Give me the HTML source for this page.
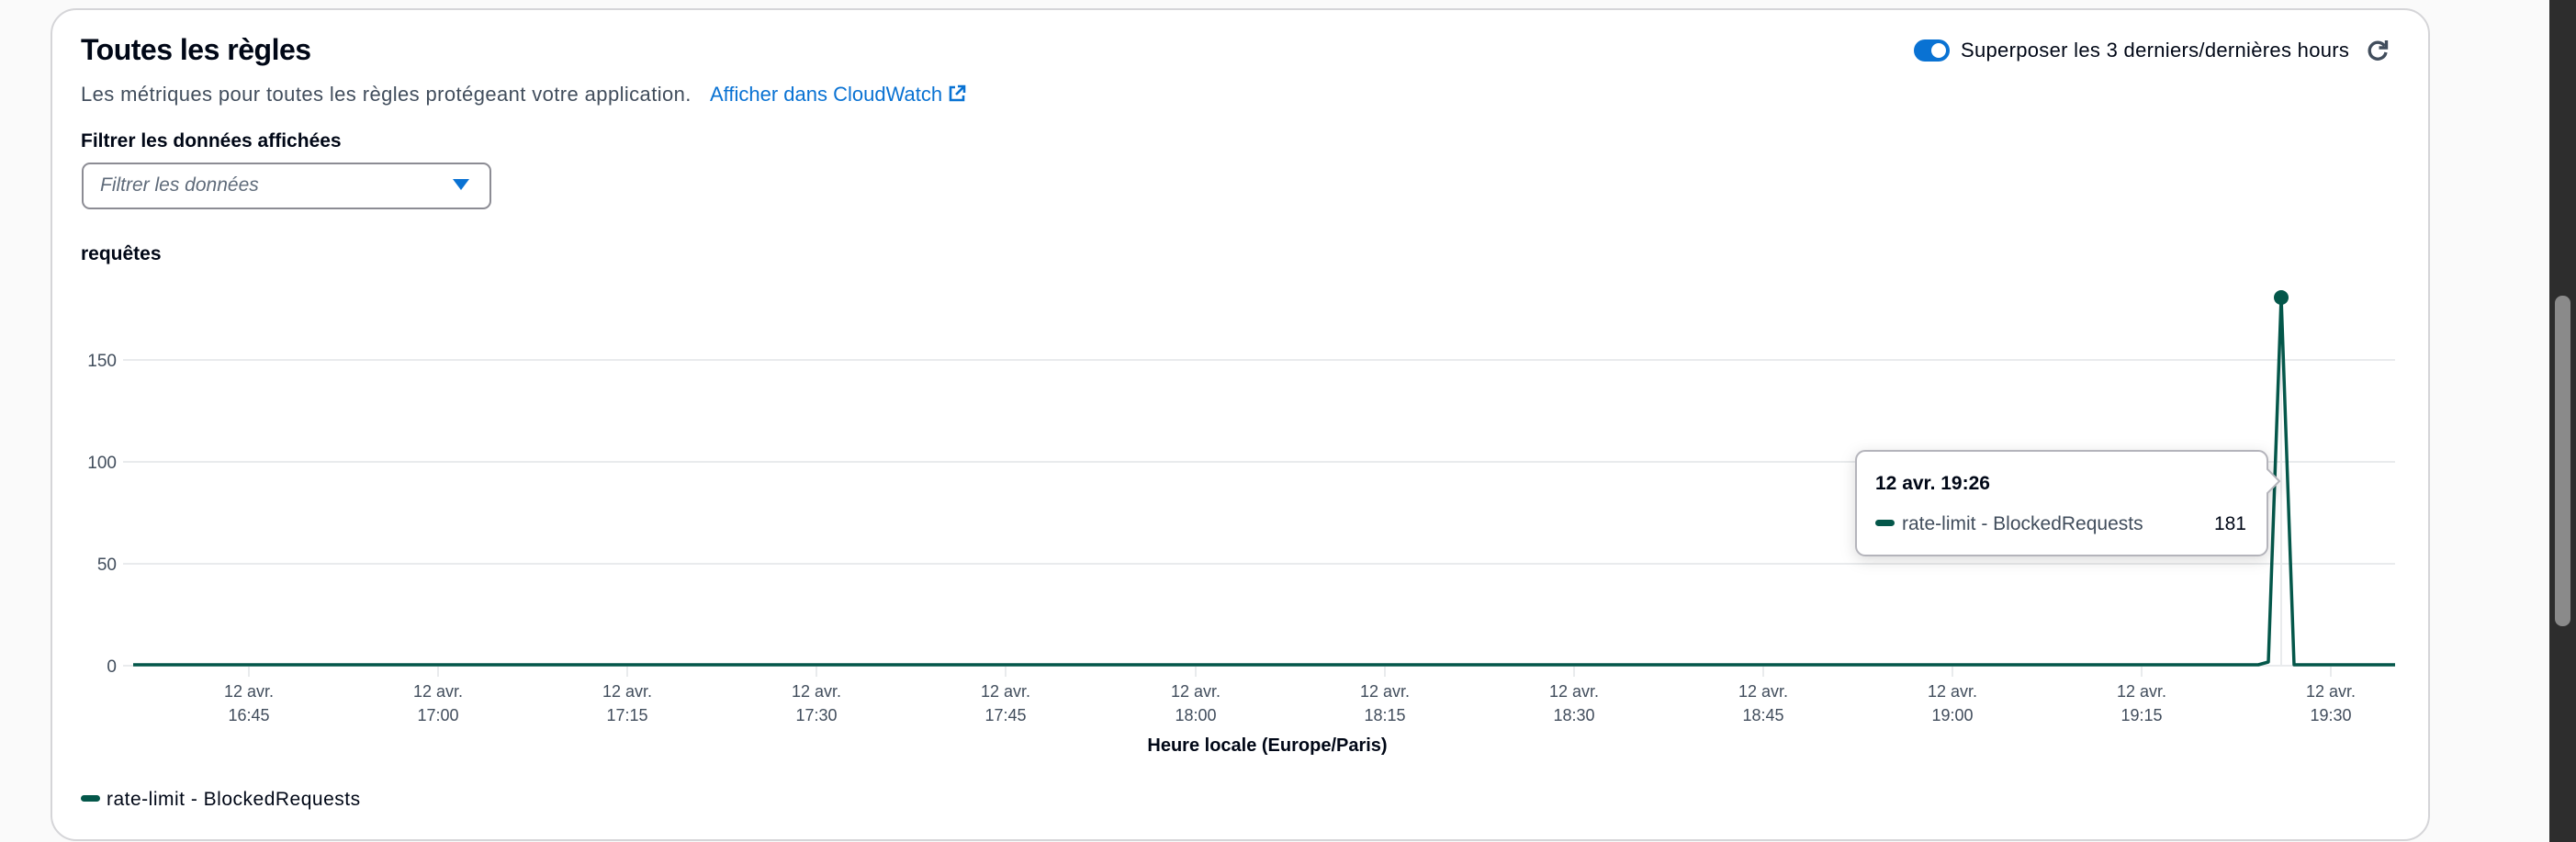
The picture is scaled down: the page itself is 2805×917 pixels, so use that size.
<!DOCTYPE html>
<html><head><meta charset="utf-8"><style>
*{margin:0;padding:0;box-sizing:border-box}
body{width:2805px;height:917px;background:#fafafa;font-family:"Liberation Sans",sans-serif;color:#000716;position:relative;overflow:hidden}
.card{position:absolute;left:55px;top:9px;width:2591px;height:907px;background:#fff;border:2px solid #d5d5d8;border-radius:28px}
.a{position:absolute;white-space:nowrap}
</style></head><body>
<div class="card"></div>
<div class="a" style="left:88px;top:36px;font-size:32px;font-weight:bold;letter-spacing:-0.5px">Toutes les règles</div>
<div class="a" style="left:88px;top:90px;font-size:22px;color:#414d5c;letter-spacing:0.4px">Les métriques pour toutes les règles protégeant votre application.</div>
<div class="a" style="left:773px;top:90px;font-size:22px;color:#0972d3">Afficher dans CloudWatch <svg width="20" height="20" viewBox="0 0 20 20" style="vertical-align:-2px"><path d="M8 3H3v14h14v-5" fill="none" stroke="#0972d3" stroke-width="2.6"/><path d="M11 2h7v7M18 2l-9 9" fill="none" stroke="#0972d3" stroke-width="2.6"/></svg></div>
<div class="a" style="left:88px;top:142px;font-size:21px;font-weight:bold">Filtrer les données affichées</div>
<div class="a" style="left:89px;top:177px;width:446px;height:51px;border:2px solid #8c8c94;border-radius:9px"></div>
<div class="a" style="left:109px;top:190px;font-size:21px;font-style:italic;color:#5f6b7a">Filtrer les données</div>
<svg class="a" style="left:491px;top:193px" width="22" height="16" viewBox="0 0 22 16"><path d="M2 2h18l-9 12z" fill="#0972d3"/></svg>
<div class="a" style="left:88px;top:265px;font-size:21px;font-weight:bold">requêtes</div>

<div class="a" style="left:2084px;top:43px;width:39px;height:24px;border-radius:12px;background:#0972d3"><div style="position:absolute;right:4px;top:4px;width:16px;height:16px;border-radius:50%;background:#fff"></div></div>
<div class="a" style="left:2135px;top:42px;font-size:22px;letter-spacing:0.3px">Superposer les 3 derniers/dernières hours</div>
<svg class="a" style="left:2575px;top:41px" width="28" height="28" viewBox="0 0 28 28"><path d="M21.5 9A9 9 0 1 0 23 16" fill="none" stroke="#414d5c" stroke-width="3.4"/><path d="M23.5 3v8h-8" fill="none" stroke="#414d5c" stroke-width="3.4"/></svg>

<svg class="a" style="left:0;top:0" width="2805" height="917">
<g stroke="#e9ebed" stroke-width="2">
<line x1="134" y1="392" x2="2608" y2="392"/><line x1="134" y1="503" x2="2608" y2="503"/><line x1="134" y1="614" x2="2608" y2="614"/><line x1="134" y1="725" x2="2608" y2="725"/>
<line x1="271" y1="725" x2="271" y2="737"/><line x1="477" y1="725" x2="477" y2="737"/><line x1="683" y1="725" x2="683" y2="737"/><line x1="889" y1="725" x2="889" y2="737"/><line x1="1095" y1="725" x2="1095" y2="737"/><line x1="1302" y1="725" x2="1302" y2="737"/><line x1="1508" y1="725" x2="1508" y2="737"/><line x1="1714" y1="725" x2="1714" y2="737"/><line x1="1920" y1="725" x2="1920" y2="737"/><line x1="2126" y1="725" x2="2126" y2="737"/><line x1="2332" y1="725" x2="2332" y2="737"/><line x1="2538" y1="725" x2="2538" y2="737"/>
<line x1="2484" y1="324" x2="2484" y2="725"/>
</g>
<g font-family="Liberation Sans,sans-serif" font-size="19" fill="#414d5c" text-anchor="end">
<text x="127" y="399">150</text><text x="127" y="510">100</text><text x="127" y="621">50</text><text x="127" y="732">0</text>
</g>
<g font-family="Liberation Sans,sans-serif" font-size="18" fill="#414d5c" text-anchor="middle">
<text x="271" y="759">12 avr.</text><text x="271" y="785">16:45</text>
<text x="477" y="759">12 avr.</text><text x="477" y="785">17:00</text>
<text x="683" y="759">12 avr.</text><text x="683" y="785">17:15</text>
<text x="889" y="759">12 avr.</text><text x="889" y="785">17:30</text>
<text x="1095" y="759">12 avr.</text><text x="1095" y="785">17:45</text>
<text x="1302" y="759">12 avr.</text><text x="1302" y="785">18:00</text>
<text x="1508" y="759">12 avr.</text><text x="1508" y="785">18:15</text>
<text x="1714" y="759">12 avr.</text><text x="1714" y="785">18:30</text>
<text x="1920" y="759">12 avr.</text><text x="1920" y="785">18:45</text>
<text x="2126" y="759">12 avr.</text><text x="2126" y="785">19:00</text>
<text x="2332" y="759">12 avr.</text><text x="2332" y="785">19:15</text>
<text x="2538" y="759">12 avr.</text><text x="2538" y="785">19:30</text>
</g>
<text x="1380" y="818" font-family="Liberation Sans,sans-serif" font-size="20" font-weight="bold" fill="#000716" text-anchor="middle">Heure locale (Europe/Paris)</text>
<polyline points="145,724 2459,724 2470,721 2484,324 2498,724 2608,724" fill="none" stroke="#04574a" stroke-width="3.5" stroke-linejoin="round"/>
<circle cx="2484" cy="324" r="8" fill="#04574a"/>
<rect x="88" y="866" width="21" height="7" rx="3.5" fill="#04574a"/>
<text x="116" y="877" font-family="Liberation Sans,sans-serif" font-size="21" fill="#000716" letter-spacing="0.5">rate-limit - BlockedRequests</text>
<g filter="drop-shadow(0 4px 8px rgba(0,0,0,0.15))">
<path d="M2031 491H2459a10 10 0 0 1 10 10V511L2482 524L2469 537V595a10 10 0 0 1 -10 10H2031a10 10 0 0 1 -10 -10V501a10 10 0 0 1 10 -10z" fill="#fff" stroke="#b4b4bb" stroke-width="2"/>
</g>
<text x="2042" y="533" font-family="Liberation Sans,sans-serif" font-size="21" font-weight="bold" fill="#000716">12 avr. 19:26</text>
<rect x="2042" y="566" width="21" height="7" rx="3.5" fill="#04574a"/>
<text x="2071" y="577" font-family="Liberation Sans,sans-serif" font-size="21" fill="#414d5c">rate-limit - BlockedRequests</text>
<text x="2446" y="577" font-family="Liberation Sans,sans-serif" font-size="21" fill="#000716" text-anchor="end">181</text>
</svg>
<div class="a" style="left:2776px;top:0;width:29px;height:917px;background:#2d2d2d"></div>
<div class="a" style="left:2782px;top:322px;width:17px;height:360px;border-radius:8px;background:#8a8a8a"></div>
</body></html>
